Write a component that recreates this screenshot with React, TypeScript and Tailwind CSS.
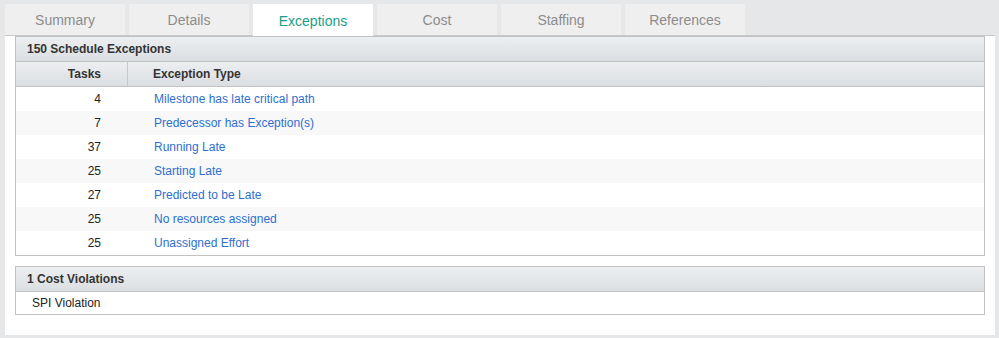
import React from "react";

const tabs = ["Summary", "Details", "Exceptions", "Cost", "Staffing", "References"];
const rows: [number, string][] = [
  [4, "Milestone has late critical path"],
  [7, "Predecessor has Exception(s)"],
  [37, "Running Late"],
  [25, "Starting Late"],
  [27, "Predicted to be Late"],
  [25, "No resources assigned"],
  [25, "Unassigned Effort"],
];

export default function App() {
  return (
    <div
      className="w-[999px] h-[338px] bg-[#e6e7e8] pt-1 pl-[5px] pr-1 text-[12px] text-[#222]"
      style={{ fontFamily: '"Liberation Sans", Arial, sans-serif' }}
    >
      <div className="flex gap-1 h-[32px] border-b border-[#c9c9c9]">
        {tabs.map((t) => {
          const active = t === "Exceptions";
          return (
            <div
              key={t}
              className={
                active
                  ? "w-[120px] -mb-px pt-[2px] flex items-center justify-center bg-white text-[14px] text-[#17a086]"
                  : "w-[120px] pt-[2px] flex items-center justify-center bg-[#efefef] text-[14px] text-[#8c8c8c]"
              }
            >
              {t}
            </div>
          );
        })}
      </div>
      <div className="bg-white h-[299px] px-[10px]">
        <div className="border border-[#c2c2c2]">
          <div className="h-[25px] flex items-center pl-[11px] font-bold text-[#333] bg-gradient-to-b from-[#eceef0] to-[#dcdfe2] border-b border-[#c2c2c2]">
            150 Schedule Exceptions
          </div>
          <div className="h-[25px] flex font-bold text-[#333] bg-gradient-to-b from-[#eceef0] to-[#dcdfe2] border-b border-[#c2c2c2]">
            <div className="w-[112px] flex items-center justify-end pr-[26px] border-r border-[#c8c8c8]">Tasks</div>
            <div className="flex-1 flex items-center pl-[25px]">Exception Type</div>
          </div>
          {rows.map(([n, label], i) => (
            <div key={i} className={i % 2 === 1 ? "h-[24px] flex items-center bg-[#f8f8f8]" : "h-[24px] flex items-center bg-white"}>
              <div className="w-[113px] text-right pr-[28px]">{n}</div>
              <div className="flex-1 pl-[25px] text-[#2d6fd2]">{label}</div>
            </div>
          ))}
        </div>
        <div className="mt-[10px] border border-[#c2c2c2]">
          <div className="h-[25px] flex items-center pl-[11px] font-bold text-[#333] bg-gradient-to-b from-[#eceef0] to-[#dcdfe2] border-b border-[#c2c2c2]">
            1 Cost Violations
          </div>
          <div className="h-[22px] flex items-center pl-[16px]">SPI Violation</div>
        </div>
      </div>
    </div>
  );
}
